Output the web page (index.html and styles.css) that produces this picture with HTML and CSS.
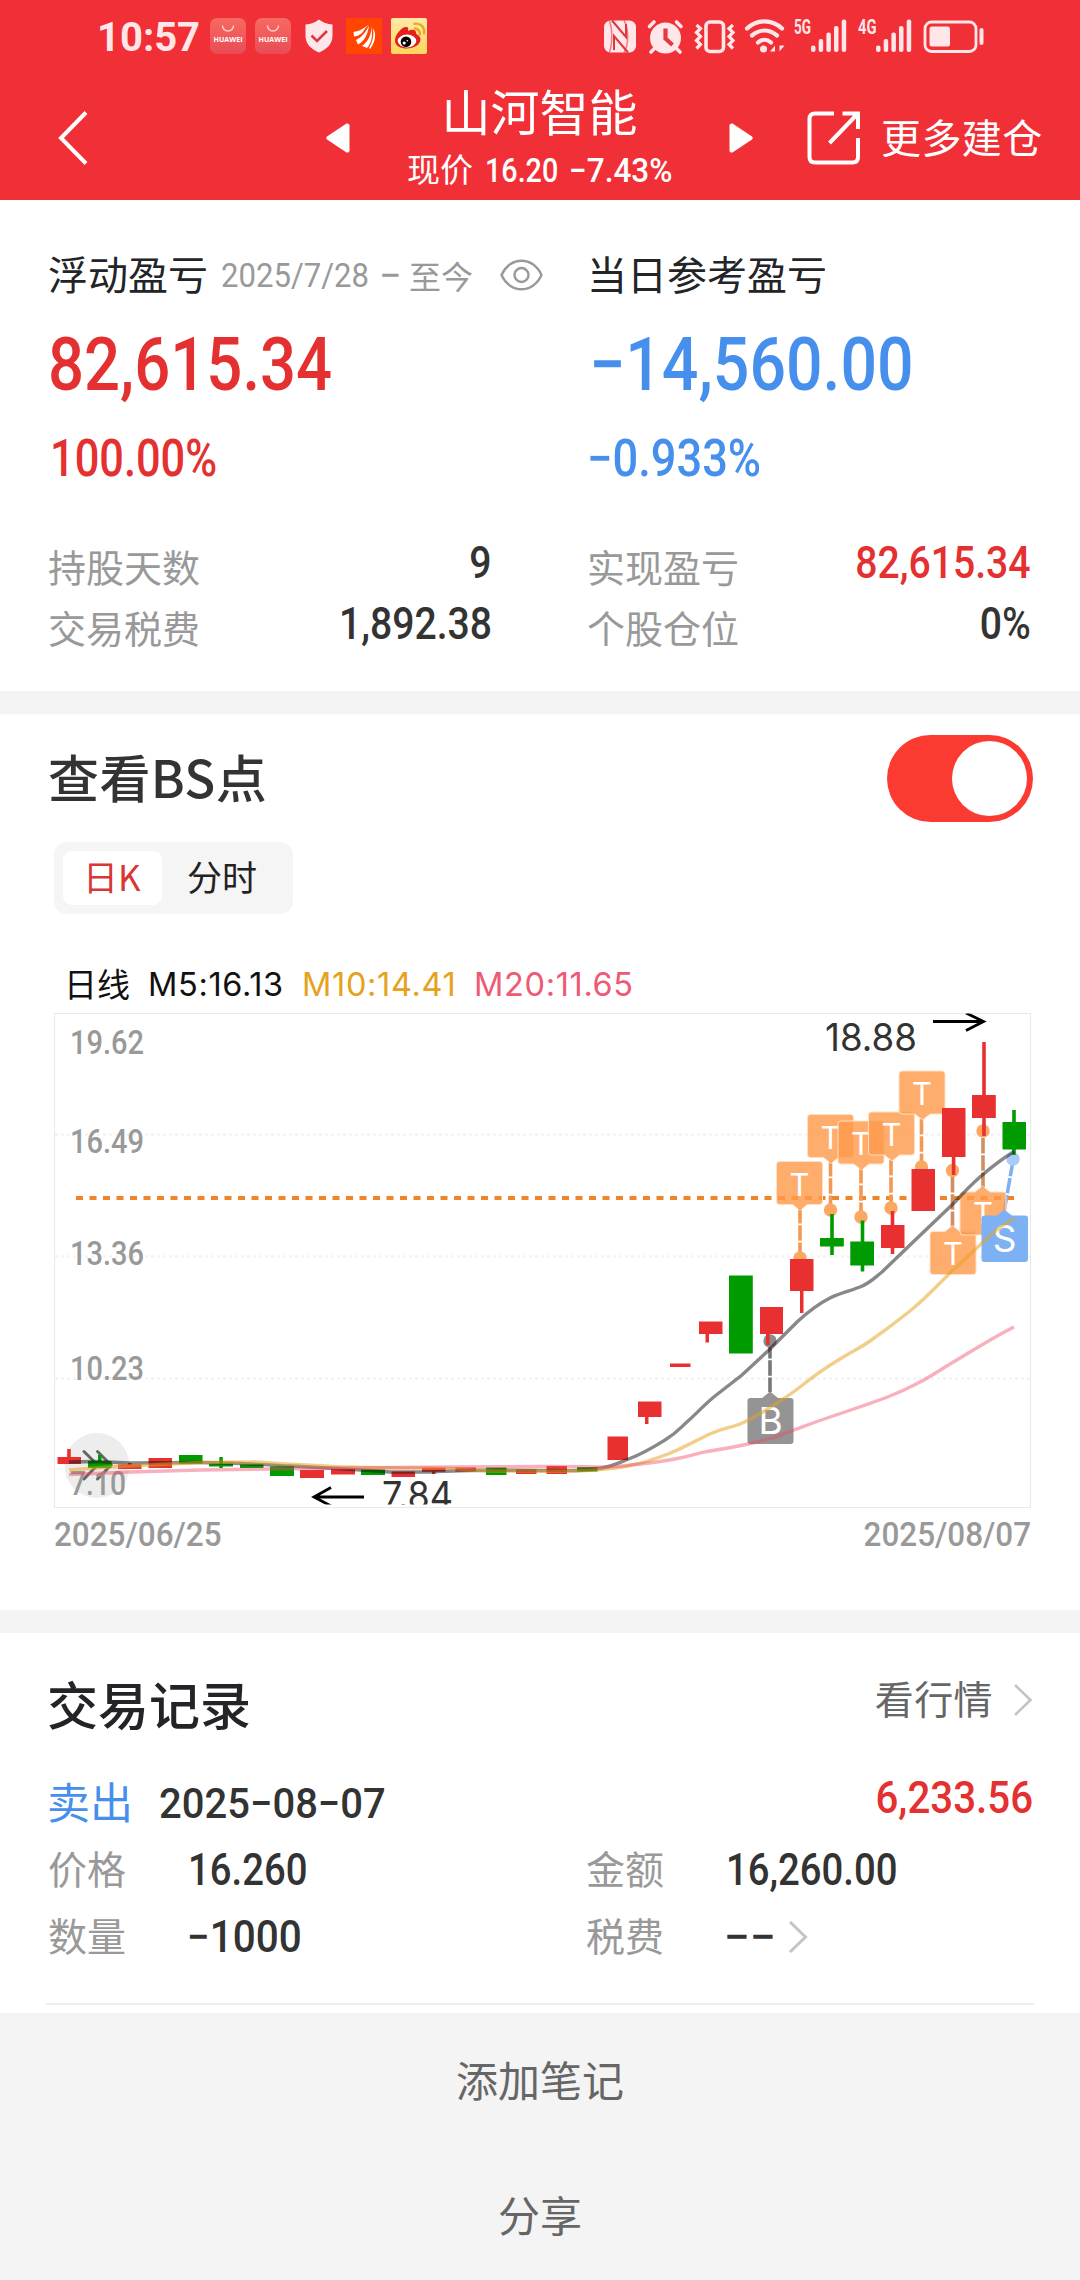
FILE: index.html
```html
<!DOCTYPE html>
<html lang="zh-CN">
<head>
<meta charset="utf-8">
<title>山河智能</title>
<link rel="stylesheet" href="styles.css">
</head>
<body>
<header class="top">
  <div class="status">
    <div class="status-left">
      <span class="clock">10:57</span>
      <svg class="app" width="36" height="36" viewBox="0 0 36 36"><defs><linearGradient id="hw" x1="0" y1="0" x2="0" y2="1"><stop offset="0" stop-color="#f86a62"/><stop offset="1" stop-color="#e84c55"/></linearGradient></defs><rect width="36" height="36" rx="7" fill="url(#hw)"/><path d="M12.500 7.500a5.500 5.500 0 0 0 11 0" fill="none" stroke="#ffd0cc" stroke-width="1.400"/><text x="18" y="24" class="hw-name" textLength="29" lengthAdjust="spacingAndGlyphs">HUAWEI</text></svg>
      <svg class="app" width="36" height="36" viewBox="0 0 36 36"><rect width="36" height="36" rx="7" fill="url(#hw)"/><path d="M12.500 7.500a5.500 5.500 0 0 0 11 0" fill="none" stroke="#ffd0cc" stroke-width="1.400"/><text x="18" y="24" class="hw-name" textLength="29" lengthAdjust="spacingAndGlyphs">HUAWEI</text></svg>
      <svg class="app shield" width="28" height="34" viewBox="0 0 28 34"><path d="M14 .5C18 3.500 22 5 27.500 5.500V17c0 8-6 13.500-13.500 16.500C6.500 30.500.5 25 .5 17V5.500C6 5 10 3.500 14 .5Z" fill="#ffe6e8"/><path d="M6.500 16.500l5.500 5.500 10-10" fill="none" stroke="#d93a43" stroke-width="2.600"/></svg>
      <svg class="app" width="36" height="36" viewBox="0 0 36 36"><rect width="36" height="36" fill="#ff4500"/><path d="M7.500 14C14 13 18 10 22.500 7L19 10.500C17 15 13 18 8 18.500ZM23 7.500C20 14 16 19 10 22l2 4.500C19 23 22 15 23 7.500ZM25 8c1 7-2 15-9 20l5 2c5-5 6-14 4-22ZM27 10c4 6 2 15-3 21l-1-1c4-7 5-13 4-20Z" fill="#fff"/></svg>
      <svg class="app" width="36" height="36" viewBox="0 0 36 36"><defs><linearGradient id="wb" x1="0" y1="0" x2="0" y2="1"><stop offset="0" stop-color="#ffe9a6"/><stop offset="1" stop-color="#ffd65c"/></linearGradient></defs><rect width="36" height="36" rx="2" fill="url(#wb)"/><path d="M15 9c2.500 0 2.500 2 2 4 4-2 8-2 8 2-.5 1.500 4 2 4.500 6 0 6-7 9.500-13.500 9.500S4 28 4 22.500C4 17 10.500 9 15 9Z" fill="#e3201c"/><ellipse cx="16" cy="23" rx="9.300" ry="6.500" fill="#fff"/><circle cx="15" cy="23.800" r="5.300" fill="#000"/><circle cx="13.200" cy="25" r="1.600" fill="#fff"/><circle cx="16.300" cy="22.700" r=".8" fill="#fff"/><path d="M24 10.500a5.500 5.500 0 0 1 5 6M23.500 5.800c6-1 10.500 3.500 9.500 9.500" fill="none" stroke="#eba52b" stroke-width="2.400" stroke-linecap="round"/></svg>
    </div>
    <svg class="status-right" width="386" height="40" viewBox="600 16 386 40">
      <g fill="#ffe6e8">
        <rect x="604" y="20.500" width="32" height="32" rx="6.500"/>
        <path d="M612 20.500L626 37V24M628 52.500L614 36v14" fill="none" stroke="#d93a43" stroke-width="2"/>
        <path d="M609.500 21c3 8 3 23 0 31M624 20.500c5 8 5 24 0 32" fill="none" stroke="#f12f37" stroke-width="1.500" opacity=".6"/>
        <circle cx="665.500" cy="38" r="15.500"/>
        <path d="M649.500 26.500l4.500-4.500M681 26.500l-4.500-4.500M655 48l-4 4M676 48l4 4" stroke="#ffe6e8" stroke-width="3.600" stroke-linecap="round"/>
        <path d="M665.500 28.500v10l7 6.500" fill="none" stroke="#e13a42" stroke-width="4.200"/>
        <rect x="706" y="22" width="17.500" height="29.500" rx="4" fill="none" stroke="#ffe6e8" stroke-width="3.600"/>
        <path d="M696.500 25l4 3.500-4 4 4 4-4 4 4 4-4 4M733 25l-4 3.500 4 4-4 4 4 4-4 4 4 4" fill="none" stroke="#ffe6e8" stroke-width="3.200"/>
        <path d="M747 28.500c10-9.500 25-9.500 35 0M752 35.500c8-6.500 17-6.500 25 0M758 42.500c4-3.500 9-3.500 13 0" fill="none" stroke="#ffe6e8" stroke-width="4.200" stroke-linecap="round"/>
        <circle cx="763.500" cy="49" r="3.500"/><path d="M775 45.500v6h-5zM779.500 45.500h5l-5 6z"/>
        <text x="794" y="34" class="net" textLength="17" lengthAdjust="spacingAndGlyphs">5G</text>
        <text x="858" y="34" class="net" textLength="18.500" lengthAdjust="spacingAndGlyphs">4G</text>
        <g id="bars"><rect x="811" y="45.500" width="4.500" height="6.500" rx="2"/><rect x="818.700" y="39" width="4.500" height="13" rx="2"/><rect x="826.400" y="32.500" width="4.500" height="19.500" rx="2"/><rect x="834" y="26" width="4.500" height="26" rx="2"/><rect x="841.700" y="19.500" width="4.500" height="32.500" rx="2"/></g>
        <use href="#bars" x="65"/>
        <rect x="925" y="22" width="51" height="29.500" rx="6.500" fill="none" stroke="#ffe6e8" stroke-width="2.800"/>
        <rect x="929.500" y="26.500" width="20.500" height="20" rx="2.500"/><rect x="979.500" y="28" width="4" height="17" rx="2"/>
      </g>
    </svg>
  </div>
  <nav class="nav">
    <svg class="back" width="30" height="54" viewBox="0 0 30 54"><path d="M28 1.500L3 27l25 25.500" fill="none" stroke="#fff" stroke-width="4"/></svg>
    <svg class="prev" width="24" height="30" viewBox="0 0 24 30"><path d="M23.500 2v26q-.5 2-3 1.500L1 16.500q-1.500-1.500 0-3L20.500 .5q2.500-.5 3 1.500Z" fill="#fff"/></svg>
    <div class="title">
      <h1>山河智能</h1>
      <p><span class="zh">现价</span><span class="num price">16.20</span><span class="num pct">−7.43%</span></p>
    </div>
    <svg class="next" width="24" height="30" viewBox="0 0 24 30"><path d="M.5 2v26q.5 2 3 1.500L23 16.500q1.500-1.500 0-3L3.500 .5Q1 0 .5 2Z" fill="#fff"/></svg>
    <svg class="share" width="54" height="54" viewBox="0 0 54 54" fill="none" stroke="#fff" stroke-width="4"><path d="M27 2.500H8Q2.500 2.500 2.500 8V46Q2.500 51.500 8 51.500H45.500Q51 51.500 51 46V27"/><path d="M35.500 2.500H51V18M50 3.500L22.500 32"/></svg>
    <span class="more">更多建仓</span>
  </nav>
</header>

<section class="summary">
  <div class="col">
    <div class="row head"><span class="zh label">浮动盈亏</span><span class="num range">2025/7/28</span><span class="num dash">−</span><span class="zh now">至今</span>
      <svg class="eye" width="43" height="32" viewBox="0 0 43 32" fill="none" stroke="#999" stroke-width="2.400"><path d="M1.500 16C10-3 33-3 41.500 16 33 35 10 35 1.500 16Z"/><circle cx="21.500" cy="16" r="7"/></svg></div>
    <div class="row big up"><span class="num">82,615.34</span></div>
    <div class="row mid up"><span class="num">100.00%</span></div>
    <div class="row kv first"><span class="zh">持股天数</span><span class="num">9</span></div>
    <div class="row kv"><span class="zh">交易税费</span><span class="num">1,892.38</span></div>
  </div>
  <div class="col">
    <div class="row head"><span class="zh label">当日参考盈亏</span></div>
    <div class="row big down"><span class="num">−14,560.00</span></div>
    <div class="row mid down"><span class="num">−0.933%</span></div>
    <div class="row kv first"><span class="zh">实现盈亏</span><span class="num up">82,615.34</span></div>
    <div class="row kv"><span class="zh">个股仓位</span><span class="num zero">0%</span></div>
  </div>
</section>

<section class="chart-card">
  <div class="card-head"><h2>查看BS点</h2><span class="toggle"><i></i></span></div>
  <div class="tabs"><span class="tab active">日K</span><span class="tab">分时</span></div>
  <div class="legend"><span class="zh">日线</span><span class="ma m5">M5:16.13</span><span class="ma m10">M10:14.41</span><span class="ma m20">M20:11.65</span></div>
  <svg class="chart" width="978" height="495" viewBox="54 1013 978 495">
    <defs>
      <clipPath id="plot"><rect x="54" y="1013.500" width="978" height="491"/></clipPath>
      <g id="tTop"><path d="M3 0H43Q46 0 46 3V40Q46 43 43 43H31L23.500 49 16 43H3Q0 43 0 40V3Q0 0 3 0Z" fill="#ff9b4d" fill-opacity=".82" stroke="#ffe0c4" stroke-width="1"/><text x="23" y="34" class="flag">T</text></g>
      <g id="tBottom"><path d="M3 0H15L22.500-6 30 0H43Q46 0 46 3V40Q46 43 43 43H3Q0 43 0 40V3Q0 0 3 0Z" fill="#ff9b4d" fill-opacity=".82" stroke="#ffe0c4" stroke-width="1"/><text x="23" y="33" class="flag">T</text></g>
    </defs>
    <rect x="54.500" y="1013.500" width="976" height="494" fill="none" stroke="#e9e9e9"/>
    <path d="M55 1134.500H1030M55 1256.500H1030M55 1378.500H1030" stroke="#f3f3f3" stroke-width="2.500" stroke-dasharray="3 3"/>
    <circle cx="97" cy="1465.500" r="32.500" fill="#ededed"/>
    <path d="M84 1451.500l13.500 13.500-13.500 14M97.500 1451.500l13.500 13.500-13.500 14" fill="none" stroke="#666" stroke-width="3" stroke-linecap="round"/>
    <g class="axis">
      <text x="70" y="1053.500" textLength="74" lengthAdjust="spacingAndGlyphs">19.62</text>
      <text x="70" y="1153" textLength="74" lengthAdjust="spacingAndGlyphs">16.49</text>
      <text x="70" y="1265" textLength="74" lengthAdjust="spacingAndGlyphs">13.36</text>
      <text x="70" y="1380" textLength="74" lengthAdjust="spacingAndGlyphs">10.23</text>
      <text x="70" y="1495" textLength="56" lengthAdjust="spacingAndGlyphs">7.10</text>
    </g>
    <path d="M76 1198H1014" stroke="#f08428" stroke-width="4" stroke-dasharray="7 6.500"/>
    <g stroke="#f29a55" stroke-width="3.600" stroke-dasharray="15.500 1.700">
      <path d="M800 1208V1257M830.500 1161V1210M861 1168V1217M891 1160V1208M921.500 1119V1167"/>
      <path d="M952.500 1227V1172M983 1188V1133" stroke="#cf8f62"/>
      <path d="M1013 1161L1004 1212" stroke="#7fb0f2"/>
      <path d="M770 1343V1392" stroke="#777"/>
    </g>
    <g fill="#fda862"><circle cx="800" cy="1258" r="6.700"/><circle cx="830.500" cy="1210" r="6.700"/><circle cx="861" cy="1217" r="6.700"/><circle cx="891" cy="1208" r="6.700"/><circle cx="921.500" cy="1167" r="6.700"/><circle cx="952.500" cy="1170.500" r="6.700"/><circle cx="983" cy="1131" r="6.700"/></g>
    <circle cx="1013" cy="1159" r="6.700" fill="#a9cbf8"/><circle cx="770" cy="1341" r="6.700" fill="#8c8c8c"/>
    <use href="#tTop" x="776.500" y="1161.500"/><use href="#tTop" x="807.500" y="1114.500"/><use href="#tTop" x="838" y="1121"/><use href="#tTop" x="868.500" y="1112"/><use href="#tTop" x="899" y="1071"/>
    <use href="#tBottom" x="930" y="1231.500"/><use href="#tBottom" x="960" y="1192"/>
    <path d="M984.500 1215.500H997L1004 1209.500 1012 1215.500H1025Q1028 1215.500 1028 1218.500V1259Q1028 1262 1025 1262H984.500Q981.500 1262 981.500 1259V1218.500Q981.500 1215.500 984.500 1215.500Z" fill="#7eb1f3"/>
    <text x="1004.500" y="1252" class="flag s">S</text>
    <path d="M750.500 1398H762L770 1391.500 778 1398H790.500Q793.500 1398 793.500 1401V1441Q793.500 1444 790.500 1444H750.500Q747.500 1444 747.500 1441V1401Q747.500 1398 750.500 1398Z" fill="#949494"/>
    <text x="770.500" y="1433.500" class="flag b">B</text>
    <g fill="#e83030">
      <path d="M57.500 1457h23.500v7H57.500zM67.200 1449h3.600v15h-3.600z"/>
      <path d="M118 1464.500h23.500v4.500H118zM128 1463h3.500v3h-3.500zM148.500 1458H172v10h-23.500z"/>
      <path d="M300 1470h24v8h-24zM331 1469h24v5.500h-24zM391.500 1471.500H415v5.500h-23.500zM422 1467.800h23.500v4H422zM432 1470h3.500v4H432zM455.500 1467.500H476v4h-20.500zM516 1469.500h20.500v4.500H516zM546.500 1466H567v8h-20.500z"/>
      <path d="M607.500 1436.500H628V1460h-20.500zM638 1401.500h23.500V1417H638zM645 1417h3.500v7H645zM670 1363.500h20.500v3.500H670zM699 1321.500h23.500V1334H699zM705.500 1334h3.500v8.500h-3.500zM760 1307h23v27h-23zM766 1334h3.600v11H766z"/>
      <path d="M790 1259h23.500v32H790zM800 1291h3.500v22H800zM881 1225h23.500v23H881zM890.700 1211h3.600v43h-3.600zM911.500 1169H935v42h-23.500zM942 1108h23.500v49H942zM951.800 1157h3.600v18h-3.600zM972 1095h23.800v23H972zM982.200 1042h3.600v94h-3.600z"/>
    </g>
    <g fill="#009b00">
      <path d="M88 1461h23.500v7H88zM98 1455h3.500v6H98zM179 1455h23.500v8.500H179zM209 1463.500h24v3h-24zM219.300 1457h3.500v11h-3.500zM240 1464.500h23.500v3.500H240zM270 1466.500h24v9.500h-24zM361 1469.500h24v5.500h-24zM486 1467.500h20.500v7.500H486zM577 1467h20.500v4.500H577z"/>
      <path d="M729 1275.500h23.800v78H729zM820 1238h23.800v8.500H820zM830.200 1214h3.600v41h-3.600zM850.300 1241.500H874v24h-23.700zM860.700 1220.500h3.600v51h-3.600zM1002.500 1122h23.500v27.500h-23.500zM1012.200 1110h3.600v45h-3.600z"/>
    </g>
    <g fill="none" stroke-width="3.400">
      <path d="M69 1462L95 1461.500 130 1463 200 1462.500C240 1463 270 1465 290 1466S350 1469 390 1472H430C460 1470 500 1470 540 1470.500S590 1470 602 1468 618 1463 631 1458 652 1448 665 1440 680 1428 688 1421 705 1404 715 1396L742 1375 770 1349 797 1322C810 1310 820 1303 830 1298S850 1291 860 1287 873 1279 882 1272L910 1245 955 1202C965 1191 972 1184 980 1177S1002 1159 1014 1151.500" stroke="#111" stroke-opacity=".5"/>
      <path d="M69 1470L110 1467 200 1462.500 255 1462C290 1464 320 1466 350 1467S400 1468 430 1468 470 1471 500 1471 570 1472 595 1470 618 1468 628 1466 655 1459 668 1454 697 1440 710 1434 730 1428 740 1424 760 1414 770 1407.500 790 1395 800 1387 825 1368 840 1359 860 1348 870 1341 895 1323 910 1311 937 1286 950 1273L980 1245C990 1235 1002 1225 1014 1218.500" stroke="#e5a21c" stroke-opacity=".52"/>
      <path d="M69 1474.500L130 1472 200 1470 270 1469 350 1468 450 1467 540 1466.500C570 1466 590 1467 604 1467S628 1465 640 1464 665 1461 680 1458 697 1453 710 1451 740 1446 757 1442 775 1437 790 1431.500 815 1422 830 1417 875 1402 890 1396 910 1387 920 1382 940 1370 950 1364L980 1346C990 1340 1002 1333 1014 1327" stroke="#ee4864" stroke-opacity=".43"/>
    </g>
    <g clip-path="url(#plot)" fill="none" stroke="#000" stroke-width="2.800">
      <path d="M933 1021.500H983M966 1013L983.500 1021.500 966 1030.500"/>
      <path d="M364 1497H314M331 1487.500L314 1497 331 1506"/>
      <text x="825" y="1051" class="peak" textLength="92" lengthAdjust="spacingAndGlyphs">18.88</text>
      <text x="382" y="1509" class="peak" textLength="71" lengthAdjust="spacingAndGlyphs">7.84</text>
    </g>
  </svg>
  <div class="dates"><span class="num">2025/06/25</span><span class="num">2025/08/07</span></div>
</section>

<section class="records">
  <div class="rec-head"><h2>交易记录</h2><span class="zh quote">看行情</span><svg class="chev" width="20" height="34" viewBox="0 0 20 34"><path d="M2 2l15.500 15L2 32" fill="none" stroke="#c4c4c4" stroke-width="2.600"/></svg></div>
  <div class="trade"><span class="zh side">卖出</span><span class="num date">2025−08−07</span><span class="num gain">6,233.56</span></div>
  <div class="detail"><span class="zh">价格</span><span class="num">16.260</span><span class="zh">金额</span><span class="num">16,260.00</span></div>
  <div class="detail"><span class="zh">数量</span><span class="num qty">−1000</span><span class="zh">税费</span><span class="tax"><span class="num none">−−</span><svg class="chev" width="20" height="34" viewBox="0 0 20 34"><path d="M2 2l15.500 15L2 32" fill="none" stroke="#c4c4c4" stroke-width="3"/></svg></span></div>
</section>

<footer class="actions"><span>添加笔记</span><span>分享</span></footer>
</body>
</html>
```
FILE: styles.css
```css
* { box-sizing: border-box; margin: 0; padding: 0; }
body {
  width: 1080px;
  height: 2280px;
  overflow: hidden;
  background: #f4f4f4;
  color: #333;
  font-family: "Noto Sans CJK SC", sans-serif;
  line-height: 1;
}
svg { display: block; flex: none; }
span { white-space: nowrap; }
.zh { padding-bottom: .1em; }
.num {
  display: inline-block;
  font-family: Roboto, sans-serif;
  font-weight: 500;
  transform: scaleX(.87);
  transform-origin: left center;
}
.up { color: #e43030; }
.down { color: #468fec; }

/* header */
.top { height: 200px; background: #f12f37; color: #fff; }
.status { display: flex; justify-content: space-between; align-items: center; height: 72px; padding: 0 94px 0 97px; }
.status-left { display: flex; align-items: center; }
.clock { width: 113px; font: 700 40px/1 Roboto, sans-serif; color: #ffe6e8; padding-top: 4px; }
.app { margin-right: 9px; }
.shield { margin: 0 13px 0 5px; }
.hw-name { font: 700 7.5px "Open Sans", sans-serif; fill: #fff; text-anchor: middle; }
.net { font: 700 20px Roboto, sans-serif; }
.nav { display: flex; align-items: center; height: 128px; padding: 4px 0 0 58px; }
.prev { margin-left: 238px; }
.title { width: 379px; height: 128px; text-align: center; }
.title h1 { font-size: 49px; font-weight: 400; line-height: 48px; margin-top: 12px; }
.title p { display: flex; align-items: center; height: 38px; margin-top: 17px; padding-left: 57px; font-size: 33px; }
.title .price { width: 84px; margin-left: 12px; }
.title .pct { transform: scaleX(.955); }
.share { margin-left: 54px; }
.more { margin: -5px 0 0 20px; font-size: 40px; letter-spacing: .4px; }

/* profit summary */
.summary { display: flex; height: 491px; padding: 40px 49px 0 48px; background: #fff; }
.col:first-child { width: 444px; margin-right: 95px; }
.col:last-child { flex: 1; }
.row { display: flex; align-items: center; }
.head { height: 70px; color: #999; }
.head .label { font-size: 40px; color: #222428; }
.range { flex: none; font-size: 34px; width: 158px; margin-left: 13px; font-weight: 450; }
.range.num { transform: scaleX(.915); }
.dash { flex: none; font-size: 34px; width: 30px; }
.dash.num { transform: scaleX(1.15); }
.now { font-size: 32px; padding-bottom: 0; }
.eye { margin-left: 27px; }
.big { height: 106px; padding-top: 3px; font-size: 74px; }
.big.up .num { transform: scaleX(.857); }
.big.down { padding-left: 2px; }
.mid { height: 84px; font-size: 51px; }
.mid.up { padding-left: 2px; }
.mid.up .num { transform: scaleX(.85); }
.mid.down .num { transform: scaleX(.887); }
.kv { height: 61px; justify-content: space-between; }
.kv.first { margin-top: 37px; }
.kv .zh { font-size: 38px; color: #999; }
.kv .num { font-size: 45px; transform-origin: right center; margin-bottom: 10px; }

/* chart card */
.chart-card { margin-top: 23px; height: 896px; padding-top: 21px; background: #fff; }
.card-head { display: flex; justify-content: space-between; height: 87px; padding: 0 47px 0 48px; }
.card-head h2 { font-size: 51px; font-weight: 500; line-height: 82px; letter-spacing: .4px; }
.toggle { width: 146px; height: 87px; padding: 6px; border-radius: 44px; background: #fb3b32; }
.toggle i { display: block; width: 75px; height: 75px; margin-left: auto; border-radius: 50%; background: #fff; }
.tabs { display: flex; align-items: center; width: 239px; height: 72px; margin: 20px 0 0 54px; padding: 0 9px; border-radius: 13px; background: #f5f5f5; color: #222; }
.tab { height: 54px; padding-left: 25px; border-radius: 9px; font-size: 35px; line-height: 50px; }
.tab.active { width: 99px; padding-left: 20px; background: #fff; color: #d93636; }
.legend { display: flex; align-items: center; height: 50px; margin: 46px 0 0 64px; font-size: 32.5px; color: #111; }
.legend .zh { width: 84px; font-size: 33px; }
.ma { font-family: Inter, sans-serif; letter-spacing: .65px; }
.m5 { width: 154px; }
.m10 { width: 172px; color: #e5a21c; }
.m20 { color: #ee5a75; }
.chart { margin: 3px 0 0 54px; }
.axis { font: 500 33.500px Roboto, sans-serif; fill: #999; }
.flag { font: 400 31px Inter, sans-serif; fill: #fff; text-anchor: middle; }
.flag.s, .flag.b { font-size: 37px; }
.peak { font: 400 38.500px Inter, sans-serif; fill: #333; stroke: none; }
.dates { display: flex; justify-content: space-between; align-items: center; height: 50px; margin: 1px 49px 0 54px; font-size: 34px; color: #999; }
.dates .num { transform: scaleX(.925); }
.dates .num:last-child { transform-origin: right center; }

/* trade records */
.records { height: 380px; margin-top: 23px; padding-top: 34px; background: #fff; }
.rec-head { display: flex; align-items: center; height: 72px; padding: 0 47px 0 47px; }
.rec-head h2 { flex: 1; font-size: 51px; font-weight: 500; color: #222428; }
.quote { font-size: 39px; color: #666; margin-bottom: 8px; letter-spacing: .4px; }
.rec-head .chev { margin: 0 0 6px 20px; }
.trade { display: flex; align-items: center; height: 60px; margin-top: 34px; padding: 0 47px; font-size: 43px; }
.side { font-size: 43px; color: #468fec; width: 112px; }
.date.num { transform: scaleX(.93); }
.gain { margin: 0 0 12px auto; font-size: 45px; color: #e43030; }
.gain.num { transform: scaleX(.895); transform-origin: right center; }
.detail { display: grid; grid-template-columns: 140px 398px 140px 1fr; align-items: center; height: 67px; margin: 0 48px; font-size: 44px; }
.trade + .detail { margin-top: 3px; margin-bottom: 1px; }
.detail .zh { font-size: 39px; color: #999; }
.detail .num { justify-self: start; }
.detail .qty { transform: scaleX(.92); margin-left: -1px; }
.tax { display: flex; align-items: center; }
.detail .none { transform: scaleX(1.05); margin-left: -2px; }
.tax .chev { margin-left: 14px; }
.detail:last-child { height: 101px; margin: 0 46px; padding: 0 2px 34px; border-bottom: 2px solid #eee; }

/* bottom actions */
.actions { display: flex; flex-direction: column; align-items: center; color: #666; font-size: 42px; }
.actions span { height: 135px; line-height: 132px; }
```
